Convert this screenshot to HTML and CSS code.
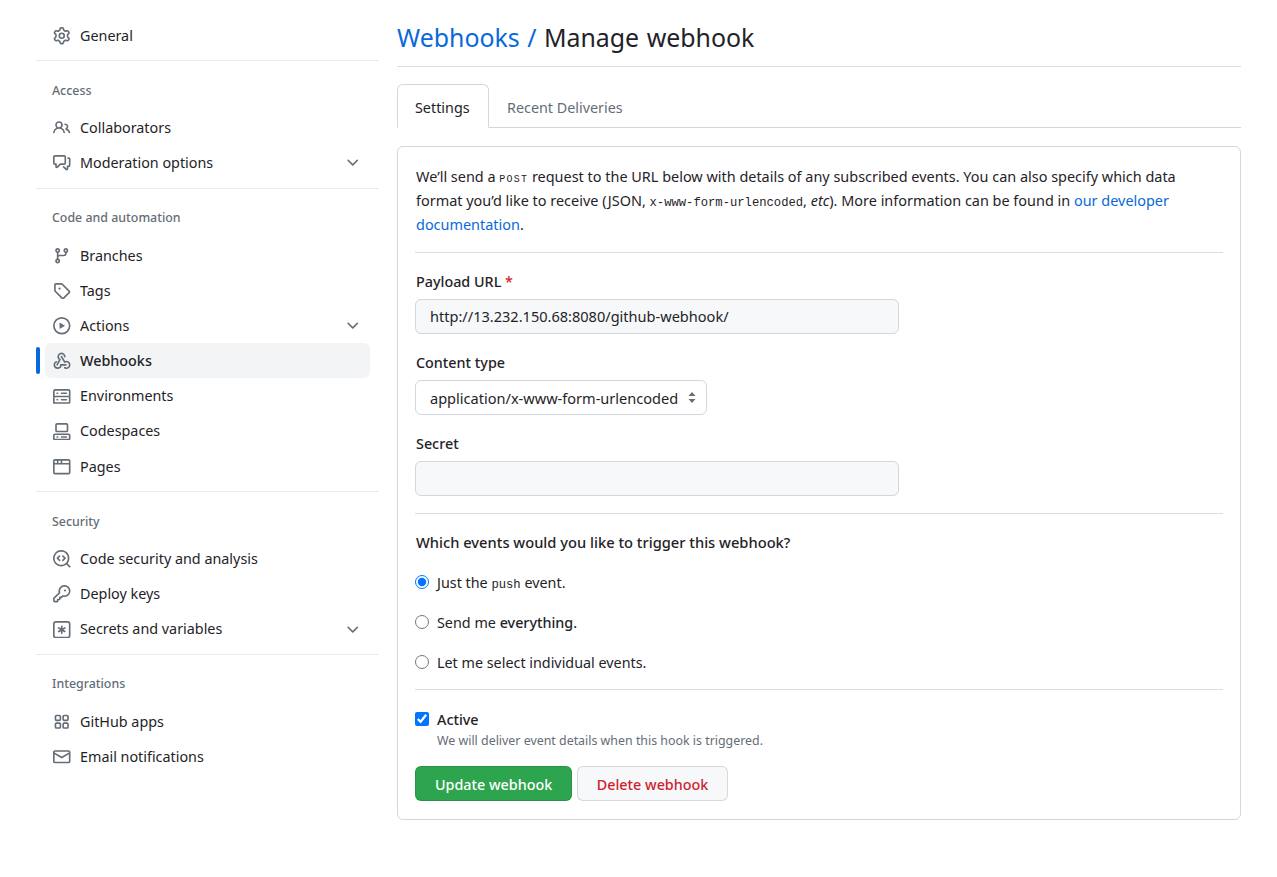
FILE: index.html
```html
<!DOCTYPE html>
<html lang="en">
<head>
  <meta charset="UTF-8">
  <meta name="viewport" content="width=device-width, initial-scale=1.0">
  <title>Manage webhook</title>
  <link rel="stylesheet" href="styles.css">
</head>
<body>
  <div class="layout">
    <nav class="sidebar">
      <a class="nav-item" href="#"><svg class="icon" viewBox="0 0 16 16"><path d="M8 0a8.2 8.2 0 0 1 .701.031C9.444.095 9.99.645 10.16 1.29l.288 1.107c.018.066.079.158.212.224.231.114.454.243.668.386.123.082.233.09.299.071l1.103-.303c.644-.176 1.392.021 1.82.63.27.385.506.792.704 1.218.315.675.111 1.422-.364 1.891l-.814.806c-.049.048-.098.147-.088.294.016.257.016.515 0 .772-.01.147.038.246.088.294l.814.806c.475.469.679 1.216.364 1.891a7.977 7.977 0 0 1-.704 1.217c-.428.61-1.176.807-1.82.63l-1.102-.302c-.067-.019-.177-.011-.3.071a5.909 5.909 0 0 1-.668.386c-.133.066-.194.158-.211.224l-.29 1.106c-.168.646-.715 1.196-1.458 1.26a8.006 8.006 0 0 1-1.402 0c-.743-.064-1.289-.614-1.458-1.26l-.289-1.106c-.018-.066-.079-.158-.212-.224a5.738 5.738 0 0 1-.668-.386c-.123-.082-.233-.09-.299-.071l-1.103.303c-.644.176-1.392-.021-1.82-.63a8.12 8.12 0 0 1-.704-1.218c-.315-.675-.111-1.422.363-1.891l.815-.806c.05-.048.098-.147.088-.294a6.214 6.214 0 0 1 0-.772c.01-.147-.038-.246-.088-.294l-.815-.806C.635 6.045.431 5.298.746 4.623a7.92 7.92 0 0 1 .704-1.217c.428-.61 1.176-.807 1.82-.63l1.102.302c.067.019.177.011.3-.071.214-.143.437-.272.668-.386.133-.066.194-.158.211-.224l.29-1.106C6.009.645 6.556.095 7.299.03 7.53.01 7.764 0 8 0Zm-.571 1.525c-.036.003-.108.036-.137.146l-.289 1.105c-.147.561-.549.967-.998 1.189-.173.086-.34.183-.5.29-.417.278-.97.423-1.529.27l-1.103-.303c-.109-.03-.175.016-.195.045-.22.312-.412.644-.573.99-.014.031-.021.11.059.19l.815.806c.411.406.562.957.53 1.456a4.709 4.709 0 0 0 0 .582c.032.499-.119 1.05-.53 1.456l-.815.806c-.081.08-.073.159-.059.19.162.346.353.677.573.989.02.03.085.076.195.046l1.102-.303c.56-.153 1.113-.008 1.53.27.161.107.328.204.501.29.447.222.85.629.997 1.189l.289 1.105c.029.109.101.143.137.146a6.6 6.6 0 0 0 1.142 0c.036-.003.108-.036.137-.146l.289-1.105c.147-.561.549-.967.998-1.189.173-.086.34-.183.5-.29.417-.278.97-.423 1.529-.27l1.103.303c.109.029.175-.016.195-.045.22-.313.411-.644.573-.99.014-.031.021-.11-.059-.19l-.815-.806c-.411-.406-.562-.957-.53-1.456a4.709 4.709 0 0 0 0-.582c-.032-.499.119-1.05.53-1.456l.815-.806c.081-.08.073-.159.059-.19a6.464 6.464 0 0 0-.573-.989c-.02-.03-.085-.076-.195-.046l-1.102.303c-.56.153-1.113.008-1.53-.27a4.44 4.44 0 0 0-.501-.29c-.447-.222-.85-.629-.997-1.189l-.289-1.105c-.029-.11-.101-.143-.137-.146a6.6 6.6 0 0 0-1.142 0ZM11 8a3 3 0 1 1-6 0 3 3 0 0 1 6 0ZM9.5 8a1.5 1.5 0 1 0-3.001.001A1.5 1.5 0 0 0 9.5 8Z"/></svg>General</a>
      <hr class="nav-divider">
      <h3 class="nav-heading">Access</h3>
      <a class="nav-item" href="#"><svg class="icon" viewBox="0 0 16 16"><path d="M2 5.5a3.5 3.5 0 1 1 5.898 2.549 5.508 5.508 0 0 1 3.034 4.084.75.75 0 1 1-1.482.235 4 4 0 0 0-7.9 0 .75.75 0 0 1-1.482-.236A5.507 5.507 0 0 1 3.102 8.05 3.493 3.493 0 0 1 2 5.5ZM11 4a3.001 3.001 0 0 1 2.22 5.018 5.01 5.01 0 0 1 2.56 3.012.749.749 0 0 1-.885.954.752.752 0 0 1-.549-.514 3.507 3.507 0 0 0-2.522-2.372.75.75 0 0 1-.574-.73v-.352a.75.75 0 0 1 .416-.672A1.5 1.5 0 0 0 11 5.5.75.75 0 0 1 11 4Zm-5.5-.5a2 2 0 1 0-.001 3.999A2 2 0 0 0 5.5 3.5Z"/></svg>Collaborators</a>
      <a class="nav-item" href="#"><svg class="icon" viewBox="0 0 16 16"><path d="M1.75 1h8.5c.966 0 1.75.784 1.75 1.75v5.5A1.75 1.75 0 0 1 10.25 10H7.061l-2.574 2.573A1.458 1.458 0 0 1 2 11.543V10h-.25A1.75 1.75 0 0 1 0 8.25v-5.5C0 1.784.784 1 1.75 1ZM1.5 2.75v5.5c0 .138.112.25.25.25h1a.75.75 0 0 1 .75.75v2.19l2.72-2.72a.749.749 0 0 1 .53-.22h3.5a.25.25 0 0 0 .25-.25v-5.5a.25.25 0 0 0-.25-.25h-8.5a.25.25 0 0 0-.25.25Zm13 2a.25.25 0 0 0-.25-.25h-.5a.75.75 0 0 1 0-1.5h.5c.966 0 1.75.784 1.75 1.75v5.5A1.75 1.75 0 0 1 14.25 12H14v1.543a1.458 1.458 0 0 1-2.487 1.03L9.22 12.28a.749.749 0 0 1 .326-1.275.749.749 0 0 1 .734.215l2.22 2.22v-2.19a.75.75 0 0 1 .75-.75h1a.25.25 0 0 0 .25-.25Z"/></svg>Moderation options<svg class="icon chevron" viewBox="0 0 16 16"><path d="M12.78 5.22a.749.749 0 0 1 0 1.06l-4.25 4.25a.749.749 0 0 1-1.06 0L3.22 6.28a.749.749 0 1 1 1.06-1.06L8 8.939l3.72-3.719a.749.749 0 0 1 1.06 0Z"/></svg></a>
      <hr class="nav-divider">
      <h3 class="nav-heading">Code and automation</h3>
      <a class="nav-item" href="#"><svg class="icon" viewBox="0 0 16 16"><path d="M9.5 3.25a2.25 2.25 0 1 1 3 2.122V6A2.5 2.5 0 0 1 10 8.5H6a1 1 0 0 0-1 1v1.128a2.251 2.251 0 1 1-1.5 0V5.372a2.25 2.25 0 1 1 1.5 0v1.836A2.493 2.493 0 0 1 6 7h4a1 1 0 0 0 1-1v-.628A2.25 2.25 0 0 1 9.5 3.25Zm-6 0a.75.75 0 1 0 1.5 0 .75.75 0 0 0-1.5 0Zm8.25-.75a.75.75 0 1 0 0 1.5.75.75 0 0 0 0-1.5ZM4.25 12a.75.75 0 1 0 0 1.5.75.75 0 0 0 0-1.5Z"/></svg>Branches</a>
      <a class="nav-item" href="#"><svg class="icon" viewBox="0 0 16 16"><path d="M1 7.775V2.75C1 1.784 1.784 1 2.75 1h5.025c.464 0 .91.184 1.238.513l6.25 6.25a1.75 1.75 0 0 1 0 2.474l-5.026 5.026a1.75 1.75 0 0 1-2.474 0l-6.25-6.25A1.752 1.752 0 0 1 1 7.775Zm1.5 0c0 .066.026.13.073.177l6.25 6.25a.25.25 0 0 0 .354 0l5.025-5.025a.25.25 0 0 0 0-.354l-6.25-6.25a.25.25 0 0 0-.177-.073H2.75a.25.25 0 0 0-.25.25ZM6 5a1 1 0 1 1 0 2 1 1 0 0 1 0-2Z"/></svg>Tags</a>
      <a class="nav-item" href="#"><svg class="icon" viewBox="0 0 16 16"><path d="M8 0a8 8 0 1 1 0 16A8 8 0 0 1 8 0ZM1.5 8a6.5 6.5 0 1 0 13 0 6.5 6.5 0 0 0-13 0Zm4.879-2.773 4.264 2.559a.25.25 0 0 1 0 .428l-4.264 2.559A.25.25 0 0 1 6 10.559V5.442a.25.25 0 0 1 .379-.215Z"/></svg>Actions<svg class="icon chevron" viewBox="0 0 16 16"><path d="M12.78 5.22a.749.749 0 0 1 0 1.06l-4.25 4.25a.749.749 0 0 1-1.06 0L3.22 6.28a.749.749 0 1 1 1.06-1.06L8 8.939l3.72-3.719a.749.749 0 0 1 1.06 0Z"/></svg></a>
      <a class="nav-item current" href="#"><svg class="icon" viewBox="0 0 16 16"><path d="M5.5 4.25a2.25 2.25 0 0 1 4.5 0 .75.75 0 0 0 1.5 0 3.75 3.75 0 1 0-6.14 2.889l-2.272 4.258a.75.75 0 0 0 1.324.706L7 7.25a.75.75 0 0 0-.309-1.015A2.25 2.25 0 0 1 5.5 4.25Z"/><path d="M7.364 3.607a.75.75 0 0 1 1.03.257l2.608 4.349a3.75 3.75 0 1 1-.628 6.785.75.75 0 0 1 .752-1.299 2.25 2.25 0 1 0-.033-3.88.75.75 0 0 1-1.03-.256L7.107 4.636a.75.75 0 0 1 .257-1.03Z"/><path class="stroke" d="M3.1 9A3 3 0 1 0 7.25 11.75H11.9"/></svg>Webhooks</a>
      <a class="nav-item" href="#"><svg class="icon" viewBox="0 0 16 16"><path d="M1.75 1h12.5c.966 0 1.75.784 1.75 1.75v4c0 .372-.116.717-.314 1 .198.283.314.628.314 1v4a1.75 1.75 0 0 1-1.75 1.75H1.75A1.75 1.75 0 0 1 0 13.75v-4c0-.372.116-.717.314-1a1.739 1.739 0 0 1-.314-1v-4C0 1.784.784 1 1.75 1ZM1.5 2.75v4c0 .138.112.25.25.25h12.5a.25.25 0 0 0 .25-.25v-4a.25.25 0 0 0-.25-.25H1.75a.25.25 0 0 0-.25.25Zm.25 5.75a.25.25 0 0 0-.25.25v4c0 .138.112.25.25.25h12.5a.25.25 0 0 0 .25-.25v-4a.25.25 0 0 0-.25-.25ZM7 4.75A.75.75 0 0 1 7.75 4h4.5a.75.75 0 0 1 0 1.5h-4.5A.75.75 0 0 1 7 4.75ZM7.75 10h4.5a.75.75 0 0 1 0 1.5h-4.5a.75.75 0 0 1 0-1.5ZM3 4.75A.75.75 0 0 1 3.75 4h.5a.75.75 0 0 1 0 1.5h-.5A.75.75 0 0 1 3 4.75ZM3.75 10h.5a.75.75 0 0 1 0 1.5h-.5a.75.75 0 0 1 0-1.5Z"/></svg>Environments</a>
      <a class="nav-item" href="#"><svg class="icon" viewBox="0 0 16 16"><path d="M0 11.25c0-.966.784-1.75 1.75-1.75h12.5c.966 0 1.75.784 1.75 1.75v3A1.75 1.75 0 0 1 14.25 16H1.75A1.75 1.75 0 0 1 0 14.25Zm2-9.5C2 .784 2.784 0 3.75 0h8.5C13.216 0 14 .784 14 1.75v5a1.75 1.75 0 0 1-1.75 1.75h-8.5A1.75 1.75 0 0 1 2 6.75Zm1.75-.25a.25.25 0 0 0-.25.25v5c0 .138.112.25.25.25h8.5a.25.25 0 0 0 .25-.25v-5a.25.25 0 0 0-.25-.25Zm-2 9.5a.25.25 0 0 0-.25.25v3c0 .138.112.25.25.25h12.5a.25.25 0 0 0 .25-.25v-3a.25.25 0 0 0-.25-.25Z"/><path d="M7 12.75a.75.75 0 0 1 .75-.75h4.5a.75.75 0 0 1 0 1.5h-4.5a.75.75 0 0 1-.75-.75Zm-4 0a.75.75 0 0 1 .75-.75h.5a.75.75 0 0 1 0 1.5h-.5a.75.75 0 0 1-.75-.75Z"/></svg>Codespaces</a>
      <a class="nav-item" href="#"><svg class="icon" viewBox="0 0 16 16"><path d="M0 2.75C0 1.784.784 1 1.75 1h12.5c.966 0 1.75.784 1.75 1.75v10.5A1.75 1.75 0 0 1 14.25 15H1.75A1.75 1.75 0 0 1 0 13.25ZM14.5 6h-13v7.25c0 .138.112.25.25.25h12.5a.25.25 0 0 0 .25-.25Zm-6-3.5v2h6V2.75a.25.25 0 0 0-.25-.25ZM5 2.5v2h2v-2Zm-3.25 0a.25.25 0 0 0-.25.25V4.5h2v-2Z"/></svg>Pages</a>
      <hr class="nav-divider">
      <h3 class="nav-heading">Security</h3>
      <a class="nav-item" href="#"><svg class="icon" viewBox="0 0 16 16"><path d="M8.47 4.97a.75.75 0 0 0 0 1.06L9.94 7.5 8.47 8.97a.75.75 0 1 0 1.06 1.06l2-2a.75.75 0 0 0 0-1.06l-2-2a.75.75 0 0 0-1.06 0ZM6.53 6.03a.75.75 0 0 0-1.06-1.06l-2 2a.75.75 0 0 0 0 1.06l2 2a.75.75 0 1 0 1.06-1.06L5.06 7.5l1.47-1.47Z"/><path d="M12.246 13.307a7.501 7.501 0 1 1 1.06-1.06l2.474 2.473a.749.749 0 0 1-.326 1.275.749.749 0 0 1-.734-.215ZM1.5 7.5a6.002 6.002 0 0 0 3.608 5.504 6.002 6.002 0 0 0 6.486-1.117.478.478 0 0 1 .292-.293A6 6 0 1 0 1.5 7.5Z"/></svg>Code security and analysis</a>
      <a class="nav-item" href="#"><svg class="icon" viewBox="0 0 16 16"><path d="M10.5 0a5.499 5.499 0 1 1-1.288 10.848l-.932.932a.749.749 0 0 1-.53.22H7v.75a.749.749 0 0 1-.22.53l-.5.5a.749.749 0 0 1-.53.22H5v.75a.749.749 0 0 1-.22.53l-.5.5a.749.749 0 0 1-.53.22h-2A1.75 1.75 0 0 1 0 14.25v-2c0-.199.079-.389.22-.53l4.932-4.932A5.5 5.5 0 0 1 10.5 0Zm-4 5.5c-.001.431.069.86.205 1.269a.75.75 0 0 1-.181.768L1.5 12.56v1.69c0 .138.112.25.25.25h1.69l.06-.06v-1.19a.75.75 0 0 1 .75-.75h1.19l.06-.06v-1.19a.75.75 0 0 1 .75-.75h1.19l1.023-1.025a.75.75 0 0 1 .768-.18A4 4 0 1 0 6.5 5.5ZM11 6a1 1 0 1 1 0-2 1 1 0 0 1 0 2Z"/></svg>Deploy keys</a>
      <a class="nav-item" href="#"><svg class="icon" viewBox="0 0 16 16"><path d="M0 2.75A2.75 2.75 0 0 1 2.75 0h10.5A2.75 2.75 0 0 1 16 2.75v10.5A2.75 2.75 0 0 1 13.25 16H2.75A2.75 2.75 0 0 1 0 13.25ZM2.75 1.5c-.69 0-1.25.56-1.25 1.25v10.5c0 .69.56 1.25 1.25 1.25h10.5c.69 0 1.25-.56 1.25-1.25V2.75c0-.69-.56-1.25-1.25-1.25Z"/><path d="M8 4a.75.75 0 0 1 .75.75V6.7l1.69-.975a.75.75 0 0 1 .75 1.3L9.5 8l1.69.976a.75.75 0 0 1-.75 1.298L8.75 9.3v1.951a.75.75 0 0 1-1.5 0V9.299l-1.69.976a.75.75 0 0 1-.75-1.3L6.5 8l-1.69-.975a.75.75 0 0 1 .75-1.3l1.69.976V4.75A.75.75 0 0 1 8 4Z"/></svg>Secrets and variables<svg class="icon chevron" viewBox="0 0 16 16"><path d="M12.78 5.22a.749.749 0 0 1 0 1.06l-4.25 4.25a.749.749 0 0 1-1.06 0L3.22 6.28a.749.749 0 1 1 1.06-1.06L8 8.939l3.72-3.719a.749.749 0 0 1 1.06 0Z"/></svg></a>
      <hr class="nav-divider">
      <h3 class="nav-heading">Integrations</h3>
      <a class="nav-item" href="#"><svg class="icon" viewBox="0 0 16 16"><path d="M1.5 3.25c0-.966.784-1.75 1.75-1.75h2.5c.966 0 1.75.784 1.75 1.75v2.5A1.75 1.75 0 0 1 5.75 7.5h-2.5A1.75 1.75 0 0 1 1.5 5.75Zm7 0c0-.966.784-1.75 1.75-1.75h2.5c.966 0 1.75.784 1.75 1.75v2.5a1.75 1.75 0 0 1-1.75 1.75h-2.5A1.75 1.75 0 0 1 8.5 5.75Zm-7 7c0-.966.784-1.75 1.75-1.75h2.5c.966 0 1.75.784 1.75 1.75v2.5a1.75 1.75 0 0 1-1.75 1.75h-2.5a1.75 1.75 0 0 1-1.75-1.75Zm7 0c0-.966.784-1.75 1.75-1.75h2.5c.966 0 1.75.784 1.75 1.75v2.5a1.75 1.75 0 0 1-1.75 1.75h-2.5a1.75 1.75 0 0 1-1.75-1.75ZM3.25 3a.25.25 0 0 0-.25.25v2.5c0 .138.112.25.25.25h2.5A.25.25 0 0 0 6 5.75v-2.5A.25.25 0 0 0 5.75 3Zm7 0a.25.25 0 0 0-.25.25v2.5c0 .138.112.25.25.25h2.5a.25.25 0 0 0 .25-.25v-2.5a.25.25 0 0 0-.25-.25Zm-7 7a.25.25 0 0 0-.25.25v2.5c0 .138.112.25.25.25h2.5a.25.25 0 0 0 .25-.25v-2.5a.25.25 0 0 0-.25-.25Zm7 0a.25.25 0 0 0-.25.25v2.5c0 .138.112.25.25.25h2.5a.25.25 0 0 0 .25-.25v-2.5a.25.25 0 0 0-.25-.25Z"/></svg>GitHub apps</a>
      <a class="nav-item" href="#"><svg class="icon" viewBox="0 0 16 16"><path d="M1.75 2h12.5c.966 0 1.75.784 1.75 1.75v8.5A1.75 1.75 0 0 1 14.25 14H1.75A1.75 1.75 0 0 1 0 12.25v-8.5C0 2.784.784 2 1.75 2ZM1.5 12.251c0 .138.112.25.25.25h12.5a.25.25 0 0 0 .25-.25V5.809L8.38 9.397a.75.75 0 0 1-.76 0L1.5 5.809v6.442Zm13-8.181v-.32a.25.25 0 0 0-.25-.25H1.75a.25.25 0 0 0-.25.25v.32L8 7.88Z"/></svg>Email notifications</a>
    </nav>

    <main class="content">
      <h2 class="page-title"><a href="#">Webhooks /</a> Manage webhook</h2>
      <div class="tabs">
        <a class="tab selected" href="#">Settings</a>
        <a class="tab" href="#">Recent Deliveries</a>
      </div>
      <form class="box">
        <p class="intro">We’ll send a <code class="verb">POST</code> request to the URL below with details of any subscribed events. You can also specify which data format you’d like to receive (JSON, <code>x-www-form-urlencoded</code>, <em>etc</em>). More information can be found in <a href="#">our developer documentation</a>.</p>
        <hr class="rule">
        <label class="field-label" for="url">Payload URL <span class="required">*</span></label>
        <input class="text-input" id="url" type="text" value="http://13.232.150.68:8080/github-webhook/">
        <label class="field-label" for="type">Content type</label>
        <select class="select-input" id="type">
          <option>application/x-www-form-urlencoded</option>
        </select>
        <label class="field-label" for="secret">Secret</label>
        <input class="text-input" id="secret" type="text">
        <hr class="rule rule-events">
        <p class="question">Which events would you like to trigger this webhook?</p>
        <label class="radio-row"><input type="radio" name="events" checked><span>Just the <code>push</code> event.</span></label>
        <label class="radio-row"><input type="radio" name="events"><span>Send me <strong>everything.</strong></span></label>
        <label class="radio-row"><input type="radio" name="events"><span>Let me select individual events.</span></label>
        <hr class="rule rule-active">
        <label class="active-row"><input type="checkbox" checked><span>Active</span></label>
        <p class="note">We will deliver event details when this hook is triggered.</p>
        <div class="actions">
          <button class="btn btn-primary" type="button">Update webhook</button>
          <button class="btn btn-danger" type="button">Delete webhook</button>
        </div>
      </form>
    </main>
  </div>
</body>
</html>
```

FILE: styles.css
```css
* {
  box-sizing: border-box;
}
body {
  margin: 0;
  background-color: #fff;
  color: #1f2328;
  font-family: "Noto Sans", Arial, sans-serif;
  font-size: 14.35px;
  line-height: 20px;
}
a {
  color: #0969da;
  text-decoration: none;
}
code {
  font-family: "Liberation Mono", monospace;
  font-size: 12.2px;
  line-height: 1;
}
.layout {
  display: grid;
  grid-template-columns: 343px 844px;
  column-gap: 18px;
  padding: 0 36px;
}

/* sidebar */
.sidebar {
  padding-top: 17.9px;
}
.nav-item {
  position: relative;
  display: flex;
  align-items: center;
  gap: 9.5px;
  height: 35.2px;
  width: 325px;
  margin-left: 9px;
  padding: 1px 8.5px 0 8px;
  border-radius: 6px;
  color: #1f2328;
}
.nav-item:first-child {
  margin-bottom: -0.4px;
}
.nav-item.current {
  background-color: #f3f4f6;
  font-weight: 500;
}
.nav-item.current::before {
  content: "";
  position: absolute;
  left: -9px;
  top: 4px;
  bottom: 4px;
  width: 4px;
  border-radius: 6px;
  background-color: #0969da;
}
.icon {
  width: 17.5px;
  height: 17.5px;
  flex: none;
  fill: #656d76;
}
.icon .stroke {
  fill: none;
  stroke: #656d76;
  stroke-width: 1.5;
  stroke-linecap: round;
}
.chevron {
  margin-left: auto;
}
.nav-divider {
  height: 1px;
  margin: 7.4px 0 0;
  border: 0;
  background-color: #e7eaee;
}
.nav-heading {
  margin: 0;
  padding: 19.5px 0 10.3px 16px;
  color: #656d76;
  font-size: 12.4px;
  font-weight: 500;
  line-height: 19px;
}

/* main column */
.page-title {
  margin: 0;
  height: 67px;
  padding-top: 20px;
  border-bottom: 1px solid #d8dee4;
  font-size: 24.9px;
  font-weight: 400;
  line-height: 35px;
  word-spacing: 1px;
}
.tabs {
  display: flex;
  height: 61px;
  padding-top: 17px;
  position: relative;
}
.tabs::after {
  content: "";
  position: absolute;
  left: 0;
  right: 0;
  top: 60px;
  height: 1px;
  background-color: #d0d7de;
}
.tab {
  height: 44px;
  padding: 14px 18px;
  color: #656d76;
}
.tab.selected {
  position: relative;
  z-index: 1;
  width: 92px;
  border: 1px solid #d0d7de;
  border-bottom-color: #fff;
  border-radius: 6px 6px 0 0;
  padding: 13px 17px;
  color: #1f2328;
}

/* form box */
.box {
  margin-top: 18px;
  padding: 17px 17px 18px;
  border: 1px solid #d0d7de;
  border-radius: 6px;
}
.intro {
  margin: 0;
  padding: 1px 1px 0;
  font-size: 14.45px;
  line-height: 24px;
}
.verb {
  font-size: 10px;
  letter-spacing: 1.2px;
}
.rule {
  height: 1px;
  margin: 15px 0 0;
  border: 0;
  background-color: #d8dee4;
}
.field-label {
  display: block;
  margin: 19px 0 7px;
  padding-left: 1px;
  font-weight: 500;
}
.required {
  color: #cf222e;
}
.text-input,
.select-input {
  display: block;
  height: 35px;
  border: 1px solid #d0d7de;
  border-radius: 6px;
  padding: 0 14px;
  color: #1f2328;
  font-family: inherit;
  font-size: 14.55px;
}
.text-input {
  width: 484px;
  padding-bottom: 1px;
  background-color: #f6f8fa;
}
.select-input {
  width: 292px;
  appearance: none;
  padding-right: 24px;
  background: #fff url("data:image/svg+xml,%3Csvg xmlns='http://www.w3.org/2000/svg' width='8' height='11'%3E%3Cpath fill='%23656d76' d='M4 0l3.5 4h-7zM4 11L.5 7h7z'/%3E%3C/svg%3E") no-repeat right 10px center;
}
.rule-events {
  margin-top: 17px;
}
.question {
  margin: 18px 0 20px;
  padding-left: 1px;
  font-size: 14.7px;
  font-weight: 500;
}
.radio-row {
  display: flex;
  align-items: center;
  height: 20px;
  margin-bottom: 20px;
}
.radio-row span,
.active-row span {
  padding-top: 2px;
}
.radio-row input,
.active-row input {
  width: 14px;
  height: 14px;
  margin: 0 8px 0 0;
}
.radio-row strong {
  font-weight: 500;
}
.rule-active {
  margin-top: -3px;
}
.active-row {
  display: flex;
  align-items: center;
  height: 20px;
  margin-top: 19px;
  font-weight: 500;
}
.note {
  margin: 2px 0 0;
  padding-left: 22px;
  color: #656d76;
  font-size: 12.4px;
  line-height: 20px;
}
.actions {
  display: flex;
  gap: 5px;
  margin-top: 15px;
}
.btn {
  height: 35px;
  padding: 1px 18.5px 0;
  border: 1px solid rgba(31, 35, 40, 0.15);
  border-radius: 6px;
  font-family: inherit;
  font-size: 14.35px;
  font-weight: 500;
}
.btn-primary {
  padding: 1px 19px 0;
  background-color: #2da44e;
  color: #fff;
}
.btn-danger {
  background-color: #f6f8fa;
  color: #cf222e;
}
```
